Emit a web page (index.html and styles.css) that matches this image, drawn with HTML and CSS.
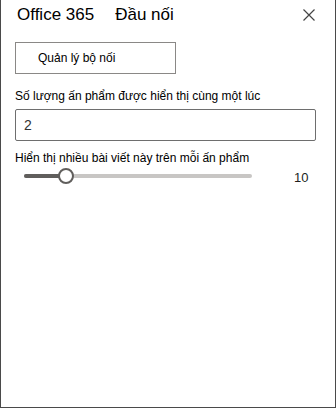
FILE: index.html
```html
<!DOCTYPE html>
<html>
<head>
<meta charset="utf-8">
<link rel="stylesheet" href="styles.css">
</head>
<body>
<div class="panel">
  <div class="header">
    <div class="title"><span class="t1">Office 365</span><span class="t2">Đầu nối</span></div>
    <button class="close" aria-label="Close">
      <svg width="12" height="12" viewBox="0 0 12 12"><path d="M0.5 0.5L11.5 11.5M11.5 0.5L0.5 11.5" stroke="#444" stroke-width="1.2" fill="none"/></svg>
    </button>
  </div>
  <div class="content">
    <button class="manage">Quản lý bộ nối</button>
    <label class="label first">Số lượng ấn phẩm được hiển thị cùng một lúc</label>
    <div class="input">2</div>
    <label class="label">Hiển thị nhiều bài viết này trên mỗi ấn phẩm</label>
    <div class="slider">
      <div class="track">
        <div class="fill" style="width:42px"></div>
        <div class="thumb" style="left:42px"></div>
      </div>
      <span class="value">10</span>
    </div>
  </div>
</div>
</body>
</html>
```
FILE: styles.css
```css
html, body {
  margin: 0;
  padding: 0;
  background: #fff;
}
body {
  font-family: "Liberation Sans", Arial, sans-serif;
  color: #201f1e;
}
.panel {
  box-sizing: border-box;
  width: 336px;
  height: 408px;
  border: 1px solid #4a4a4a;
  border-top: none;
}
.header {
  display: flex;
  align-items: center;
  justify-content: space-between;
  height: 30px;
  padding: 0 20px 0 16px;
}
.title {
  font-size: 17px;
  color: #000;
  display: flex;
  gap: 21px;
}
.close {
  border: none;
  background: none;
  padding: 0;
  width: 12px;
  height: 12px;
  display: flex;
}
.content {
  padding: 12px 19px 0 14px;
  display: flex;
  flex-direction: column;
  align-items: flex-start;
}
.manage {
  box-sizing: border-box;
  width: 161px;
  height: 32px;
  border: 1px solid #8a8886;
  background: #fff;
  font-family: "Liberation Sans", Arial, sans-serif;
  font-size: 12px;
  color: #000;
  text-align: left;
  padding: 0 0 0 22px;
}
.label {
  font-size: 12px;
  color: #000;
  margin-top: 8px;
  line-height: 18px;
}
.label.first {
  margin-top: 13px;
}
.input {
  box-sizing: border-box;
  width: 301px;
  height: 32px;
  border: 1px solid #6e6e6e;
  border-radius: 2px;
  margin-top: 4px;
  padding: 0 8px;
  display: flex;
  align-items: center;
  font-size: 14px;
  color: #333;
}
.slider {
  display: flex;
  align-items: center;
  width: 301px;
  height: 16px;
  margin-top: 1px;
}
.track {
  position: relative;
  margin-left: 9px;
  width: 228px;
  height: 4px;
  border-radius: 2px;
  background: #c8c6c4;
}
.fill {
  position: absolute;
  left: 0;
  top: 0;
  height: 4px;
  border-radius: 2px;
  background: #605e5c;
}
.thumb {
  position: absolute;
  top: -6px;
  box-sizing: border-box;
  width: 16px;
  height: 16px;
  margin-left: -8px;
  border-radius: 50%;
  border: 2px solid #605e5c;
  background: #fff;
}
.value {
  margin-left: 42px;
  margin-top: 2px;
  font-size: 13px;
  color: #201f1e;
}
```
